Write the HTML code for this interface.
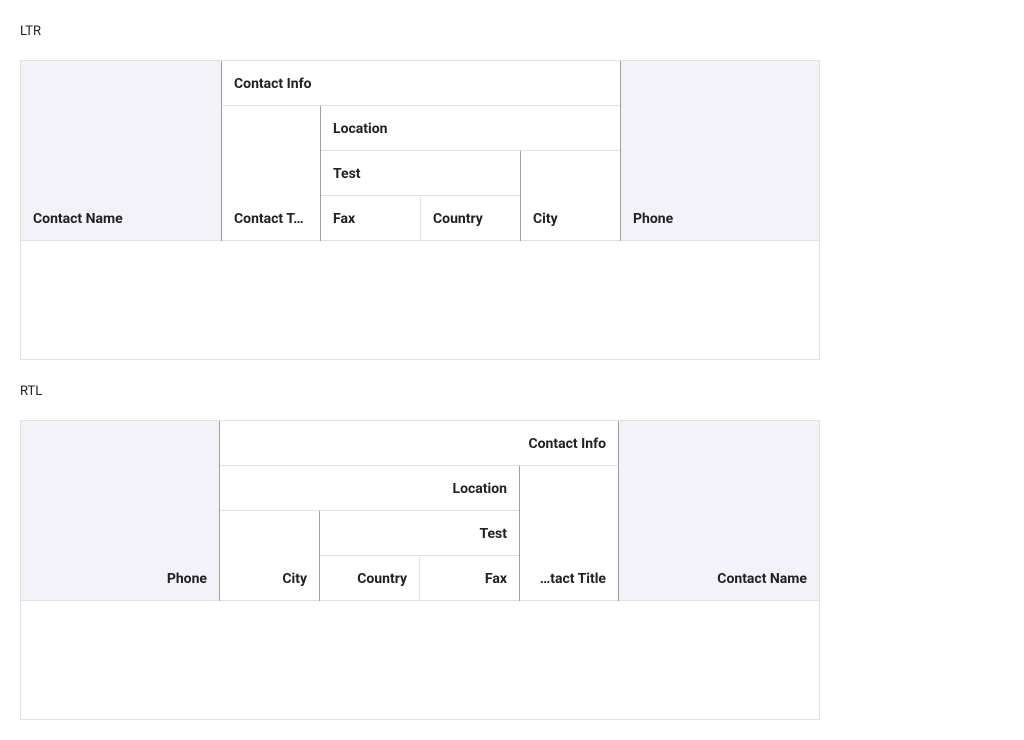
<!DOCTYPE html><html><head><style>
body{margin:0;width:1024px;height:740px;background:#fff;font-family:Roboto,"Liberation Sans",sans-serif;position:relative;overflow:hidden}
.lab{position:absolute;left:20px;font-size:13px;color:#212121}
.g{position:absolute;left:20px;width:798px;height:298px;border:1px solid #e2e2e2}
.c{position:absolute;box-sizing:border-box;font-size:14px;font-weight:bold;color:#212121;display:flex;align-items:flex-end;line-height:41px;padding:0 12px;white-space:nowrap;overflow:hidden;border-bottom:1px solid #e2e2e2}
.p{background:#f4f2f9}
.r{justify-content:flex-end;padding-right:13px}
.v{position:absolute;width:1px;background:#9e9e9e}
.vl{position:absolute;width:1px;background:#e2e2e2}
</style></head><body>
<div class="lab" style="top:24px">LTR</div>
<div class="g" style="top:60px">
 <div class="c p" style="left:0;top:0;width:201px;height:180px">Contact Name</div>
 <div class="c" style="left:201px;top:0;width:399px;height:45px">Contact Info</div>
 <div class="c" style="left:201px;top:45px;width:99px;height:135px">Contact T…</div>
 <div class="c" style="left:300px;top:45px;width:300px;height:45px">Location</div>
 <div class="c" style="left:300px;top:90px;width:200px;height:45px">Test</div>
 <div class="c" style="left:300px;top:135px;width:100px;height:45px">Fax</div>
 <div class="c" style="left:400px;top:135px;width:100px;height:45px">Country</div>
 <div class="c" style="left:500px;top:90px;width:100px;height:90px">City</div>
 <div class="c p" style="left:600px;top:0;width:198px;height:180px">Phone</div>
 <div class="v" style="left:200px;top:0;height:180px"></div>
 <div class="v" style="left:299px;top:45px;height:135px"></div>
 <div class="vl" style="left:399px;top:135px;height:45px"></div>
 <div class="v" style="left:499px;top:90px;height:90px"></div>
 <div class="v" style="left:599px;top:0;height:180px"></div>
</div>
<div class="lab" style="top:384px">RTL</div>
<div class="g" style="top:420px">
 <div class="c p r" style="left:0;top:0;width:199px;height:180px">Phone</div>
 <div class="c r" style="left:199px;top:0;width:399px;height:45px">Contact Info</div>
 <div class="c r" style="left:199px;top:45px;width:300px;height:45px">Location</div>
 <div class="c r" style="left:199px;top:90px;width:100px;height:90px">City</div>
 <div class="c r" style="left:299px;top:90px;width:200px;height:45px">Test</div>
 <div class="c r" style="left:299px;top:135px;width:100px;height:45px">Country</div>
 <div class="c r" style="left:399px;top:135px;width:100px;height:45px">Fax</div>
 <div class="c r" style="left:499px;top:45px;width:99px;height:135px">…tact Title</div>
 <div class="c p r" style="left:598px;top:0;width:200px;height:180px;padding-right:12px">Contact Name</div>
 <div class="v" style="left:198px;top:0;height:180px"></div>
 <div class="v" style="left:298px;top:90px;height:90px"></div>
 <div class="vl" style="left:398px;top:135px;height:45px"></div>
 <div class="v" style="left:498px;top:45px;height:135px"></div>
 <div class="v" style="left:597px;top:0;height:180px"></div>
</div>
</body></html>
